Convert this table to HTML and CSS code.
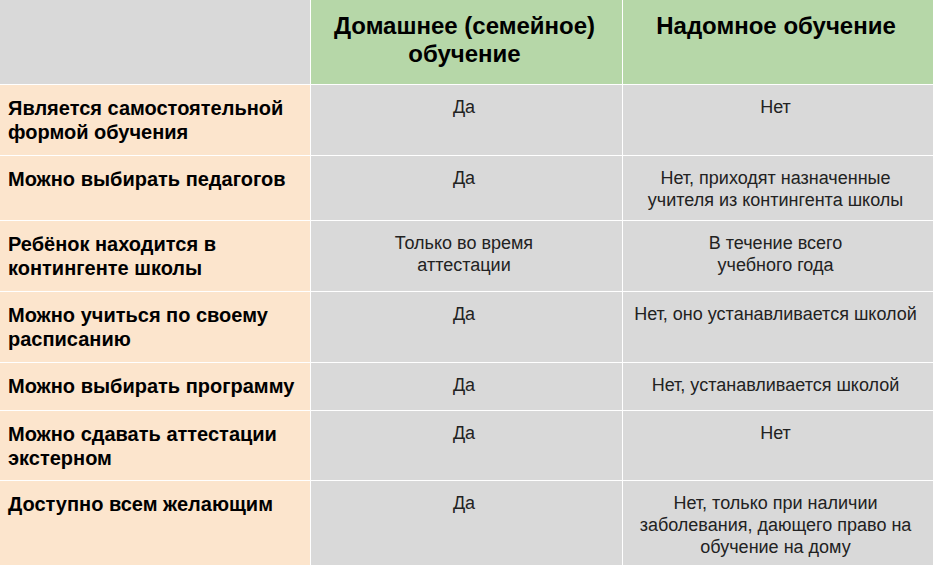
FILE: index.html
```html
<!DOCTYPE html>
<html lang="ru">
<head>
<meta charset="utf-8">
<link rel="stylesheet" href="styles.css">
</head>
<body>
<div class="table">
  <div class="corner"></div>
  <div class="head">Домашнее (семейное)<br>обучение</div>
  <div class="head">Надомное обучение</div>

  <div class="label">Является самостоятельной<br>формой обучения</div>
  <div class="cell">Да</div>
  <div class="cell">Нет</div>

  <div class="label">Можно выбирать педагогов</div>
  <div class="cell">Да</div>
  <div class="cell">Нет, приходят назначенные<br>учителя из контингента школы</div>

  <div class="label">Ребёнок находится в<br>контингенте школы</div>
  <div class="cell">Только во время<br>аттестации</div>
  <div class="cell">В течение всего<br>учебного года</div>

  <div class="label">Можно учиться по своему<br>расписанию</div>
  <div class="cell">Да</div>
  <div class="cell">Нет, оно устанавливается школой</div>

  <div class="label">Можно выбирать программу</div>
  <div class="cell">Да</div>
  <div class="cell">Нет, устанавливается школой</div>

  <div class="label">Можно сдавать аттестации<br>экстерном</div>
  <div class="cell">Да</div>
  <div class="cell">Нет</div>

  <div class="label">Доступно всем желающим</div>
  <div class="cell">Да</div>
  <div class="cell">Нет, только при наличии<br>заболевания, дающего право на<br>обучение на дому</div>
</div>
</body>
</html>
```
FILE: styles.css
```css
html, body {
  margin: 0;
  padding: 0;
  background: #ffffff;
}

.table {
  display: grid;
  grid-template-columns: 310px 311px 310px;
  grid-template-rows: 84px 70px 64px 70px 70px 47px 69px 84px;
  gap: 1px;
  width: 933px;
  background: #ffffff;
  font-family: "Liberation Sans", Arial, sans-serif;
}

.corner {
  background: #d9d9d9;
}

.head {
  background: #b6d7a8;
  color: #000;
  font-weight: bold;
  font-size: 24px;
  line-height: 28px;
  text-align: center;
  padding: 12px 4px 0 0;
  white-space: nowrap;
}

.label {
  background: #fce5cd;
  color: #000;
  font-weight: bold;
  font-size: 20px;
  line-height: 24px;
  padding: 11px 8px 0;
  white-space: nowrap;
}

.cell {
  background: #d9d9d9;
  color: #222;
  font-size: 18px;
  line-height: 22px;
  text-align: center;
  padding: 11px 5px 0 0;
  white-space: nowrap;
}
```
